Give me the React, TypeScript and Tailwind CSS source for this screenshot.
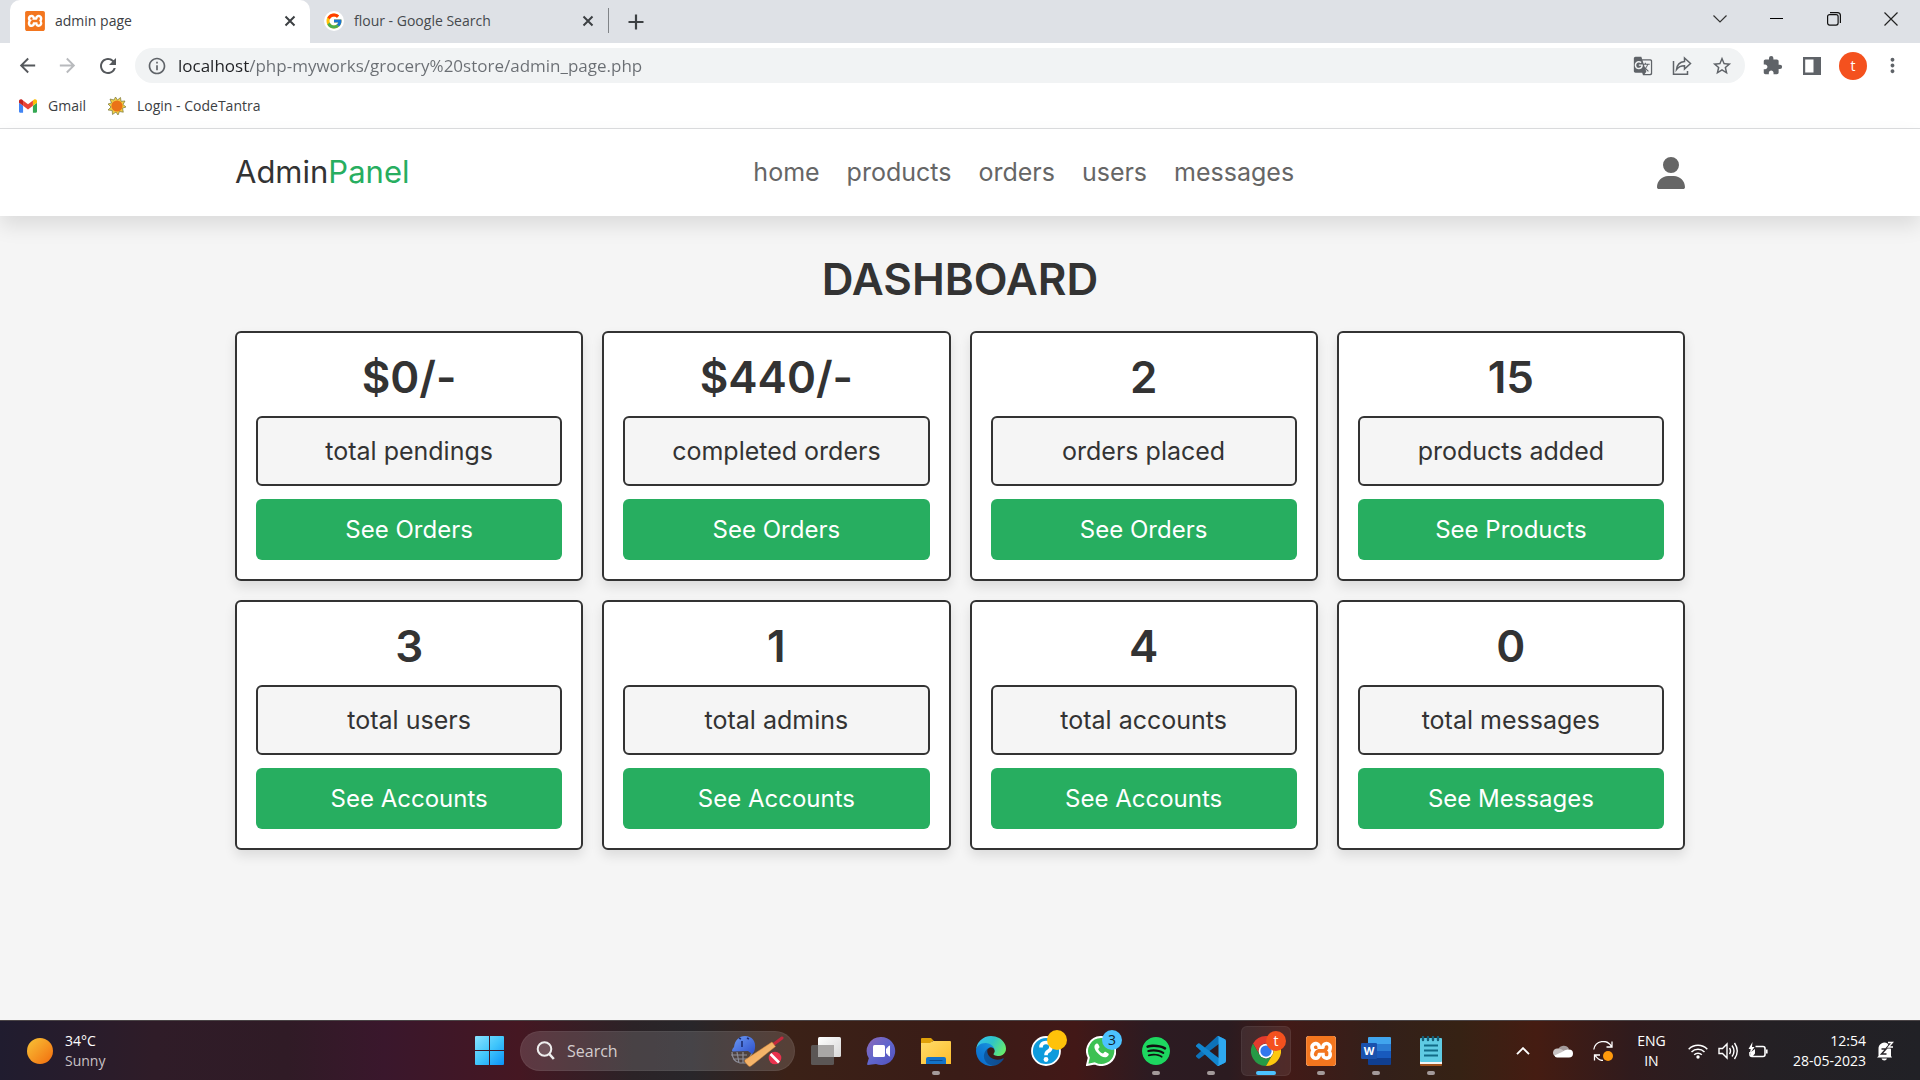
import React, { useState } from "react";
import { FcGoogle } from "react-icons/fc";
import { FaUser } from "react-icons/fa6";
import { SiXampp, SiSpotify } from "react-icons/si";
import {
  MdArrowBack,
  MdArrowForward,
  MdExtension,
  MdGTranslate,
  MdInfoOutline,
  MdMoreVert,
  MdRefresh,
  MdStarBorder,
} from "react-icons/md";

/* ---------- Browser chrome ---------- */

function XamppIcon({ className }: { className: string }) {
  return (
    <span className={`${className} flex shrink-0 rounded-[3px] bg-white`}>
      <SiXampp className="size-full text-[#f3761f]" />
    </span>
  );
}

function CloseGlyph() {
  return (
    <svg viewBox="0 0 12 12" className="size-3" stroke="#3c4043" strokeWidth="2">
      <path d="M1.5 1.5 10.5 10.5M10.5 1.5 1.5 10.5" />
    </svg>
  );
}

function GmailIcon() {
  return (
    <svg viewBox="52 42 88 66" className="h-[14px] w-[18px]">
      <path fill="#4285f4" d="M58 108h14V74L52 59v43c0 3.32 2.69 6 6 6" />
      <path fill="#34a853" d="M120 108h14c3.32 0 6-2.69 6-6V59l-20 15" />
      <path fill="#fbbc04" d="M120 48v26l20-15v-8c0-7.42-8.47-11.65-14.4-7.2" />
      <path fill="#ea4335" d="M72 74V48l24 18 24-18v26L96 92" />
      <path fill="#c5221f" d="M52 51v8l20 15V48l-5.6-4.2c-5.94-4.45-14.4-.22-14.4 7.2" />
    </svg>
  );
}

function SunIcon() {
  return (
    <svg viewBox="0 0 20 20" className="size-5">
      <path
        d="M8.500 1 10.500 4l3-2.500.5 3.800 4-.3-2 3.500 3 2.500-3.500 1.200.8 4-3.800-.7L11 19l-2-3-3.500 2.500-.3-4-4.200-.5L4 11 1 8l3.500-1L3 3l4 1z"
        fill="#f0cf45"
        stroke="#77763f"
        strokeWidth=".7"
      />
      <circle cx="10" cy="10" r="5.600" fill="#ea7317" />
    </svg>
  );
}

function TabStrip() {
  return (
    <div className="flex h-[43px] items-stretch bg-[#dee1e6] pl-[10px]">
      <div className="flex w-[300px] items-center rounded-t-[10px] bg-white pr-3 pb-[2px] pl-[15px]">
        <XamppIcon className="size-5" />
        <button className="ml-[10px] flex-1 text-left text-sm text-[#3c4043]">admin page</button>
        <button aria-label="Close admin page" className="p-[2px]">
          <CloseGlyph />
        </button>
      </div>
      <div className="mt-2 mb-[10px] flex w-[299px] items-center border-r border-[#808387] pr-3 pl-[14px]">
        <span className="flex size-5 items-center justify-center rounded-full bg-white">
          <FcGoogle className="size-[18px]" />
        </span>
        <button className="ml-[10px] flex-1 text-left text-sm text-[#45494d]">flour - Google Search</button>
        <button aria-label="Close flour search" className="p-[2px]">
          <CloseGlyph />
        </button>
      </div>
      <button aria-label="New tab" className="ml-[19px]">
        <svg viewBox="0 0 16 16" className="size-4" stroke="#3c4043" strokeWidth="2.200">
          <path d="M8 0.500v15M.5 8h15" />
        </svg>
      </button>
      <div className="ml-auto flex pb-[6px]">
        <button aria-label="Search tabs" className="flex w-[57px] items-center justify-center">
          <svg viewBox="0 0 14 8" className="h-2 w-[14px]" fill="none" stroke="#333" strokeWidth="1.200">
            <path d="M.5.5 7 7 13.500.5" />
          </svg>
        </button>
        <button aria-label="Minimize" className="flex w-[57px] items-center justify-center">
          <span className="h-px w-[13px] bg-black" />
        </button>
        <button aria-label="Restore" className="flex w-[57px] items-center justify-center">
          <svg viewBox="0 0 14 14" className="size-[14px]" fill="none" stroke="#111" strokeWidth="1.200">
            <rect x=".6" y="2.600" width="10.500" height="10.500" rx="2" />
            <path d="M3 .6h7.500q2.900 0 2.900 2.900V11" />
          </svg>
        </button>
        <button aria-label="Close window" className="flex w-[58px] items-center justify-center">
          <svg viewBox="0 0 14 14" className="size-[14px]" stroke="#222" strokeWidth="1.200">
            <path d="M.5.5l13 13M13.500.5l-13 13" />
          </svg>
        </button>
      </div>
    </div>
  );
}

function Toolbar() {
  return (
    <div className="flex h-[45px] items-center bg-white pr-4 pl-4 text-[#5f6368]">
      <button aria-label="Back" className="w-10">
        <MdArrowBack className="size-[23px] text-[#55585c]" />
      </button>
      <button aria-label="Forward" className="w-10">
        <MdArrowForward className="size-[23px] text-[#b8babd]" />
      </button>
      <button aria-label="Reload" className="w-[39px]">
        <MdRefresh className="size-6 text-[#55585c]" />
      </button>
      <div className="flex h-[35px] flex-1 items-center rounded-full bg-[#f1f3f4] pr-3 pl-3">
        <MdInfoOutline className="size-5" />
        <input
          aria-label="Address"
          defaultValue="localhost/php-myworks/grocery%20store/admin_page.php"
          className="ml-[11px] flex-1 bg-[linear-gradient(to_right,#202124_71px,#6a6e73_71px)] bg-clip-text text-[17px] text-transparent outline-none"
        />
        <div className="flex gap-[19px]">
          <button aria-label="Translate this page">
            <MdGTranslate className="size-5" />
          </button>
          <button aria-label="Share">
            <svg viewBox="0 0 20 20" className="size-5" fill="none" stroke="#5f6368" strokeWidth="1.500">
              <path d="M1.500 5v13.200h14V15" />
              <path d="M12.500 2l6 5.500-6 5.500v-3.200c-3.500 0-6 1-8 3.700.5-4.500 3-7.500 8-8z" />
            </svg>
          </button>
          <button aria-label="Bookmark this page">
            <MdStarBorder className="size-[22px]" />
          </button>
        </div>
      </div>
      <div className="ml-[17px] flex items-center">
        <button aria-label="Extensions" className="w-10">
          <MdExtension className="size-[21px]" />
        </button>
        <button aria-label="Side panel" className="w-[37px]">
          <svg viewBox="0 0 20 18" className="h-[18px] w-5">
            <path fill="#5f6368" fillRule="evenodd" d="M1 0h18v18H1zM3.200 2.500v13h8.300v-13z" />
          </svg>
        </button>
        <button className="size-7 rounded-full bg-[#f4511e] text-sm text-white">t</button>
        <button aria-label="Menu" className="ml-[14px]">
          <MdMoreVert className="size-[23px]" />
        </button>
      </div>
    </div>
  );
}

function Bookmarks() {
  return (
    <div className="flex h-[41px] items-center gap-[21px] border-b border-[#dcdddf] bg-white pb-1 pl-[19px] text-sm text-[#3c4043]">
      <a href="#gmail" className="flex items-center gap-[11px]">
        <GmailIcon />
        Gmail
      </a>
      <a href="#codetantra" className="flex items-center gap-[10px]">
        <SunIcon />
        Login - CodeTantra
      </a>
    </div>
  );
}

/* ---------- Admin page ---------- */

const navLinks = ["home", "products", "orders", "users", "messages"];

const cards = [
  { value: "$0/-", label: "total pendings", action: "See Orders" },
  { value: "$440/-", label: "completed orders", action: "See Orders" },
  { value: "2", label: "orders placed", action: "See Orders" },
  { value: "15", label: "products added", action: "See Products" },
  { value: "3", label: "total users", action: "See Accounts" },
  { value: "1", label: "total admins", action: "See Accounts" },
  { value: "4", label: "total accounts", action: "See Accounts" },
  { value: "0", label: "total messages", action: "See Messages" },
];

function SiteHeader() {
  return (
    <header className="relative bg-white shadow-[0_10px_19px_rgba(0,0,0,0.1)]">
      <div className="mx-auto flex h-[87px] max-w-[1500px] items-center justify-between px-[25px]">
        <a href="#home" className="text-[31px] text-[#333]">
          Admin<span className="text-[#27ae60]">Panel</span>
        </a>
        <nav className="flex gap-[27px] text-[25px] text-[#666]">
          {navLinks.map((link) => (
            <a key={link} href={`#${link}`}>
              {link}
            </a>
          ))}
        </nav>
        <button aria-label="Account" className="pl-[19px]">
          <FaUser className="h-8 w-7 text-[#666]" />
        </button>
      </div>
    </header>
  );
}

function Dashboard() {
  return (
    <main className="mx-auto w-full max-w-[1500px] flex-1 px-[25px] pt-[37px] pb-[25px] text-[#333]">
      <h1 className="mb-[26px] text-center text-[44px] leading-[52px] font-semibold">DASHBOARD</h1>
      <div className="grid grid-cols-4 gap-[19px]">
        {cards.map((card) => (
          <section
            key={card.label}
            className="rounded-md border-2 border-[#333] bg-white p-[19px] text-center shadow-[0_6px_12px_rgba(0,0,0,0.1)]"
          >
            <h3 className="text-[44px] leading-[50px] font-semibold">{card.value}</h3>
            <p className="mt-[14px] mb-[13px] rounded-md border-2 border-[#333] bg-[#f5f5f5] text-[25px] leading-[66px]">
              {card.label}
            </p>
            <a href="#details" className="block rounded-md bg-[#27ae60] text-2xl leading-[61px] text-white">
              {card.action}
            </a>
          </section>
        ))}
      </div>
    </main>
  );
}

/* ---------- Taskbar ---------- */

function WindowsIcon() {
  return (
    <svg viewBox="0 0 29 29" className="size-[29px]">
      <defs>
        <linearGradient id="win" x1="0" y1="0" x2="1" y2="1">
          <stop offset="0" stopColor="#8ae2ff" />
          <stop offset=".5" stopColor="#41c6fb" />
          <stop offset="1" stopColor="#0b92f8" />
        </linearGradient>
      </defs>
      <path
        fill="url(#win)"
        d="M1 0h13v14H0V1q0-1 1-1zM15 0h13q1 0 1 1v13H15zM0 15h14v14H1q-1 0-1-1zM15 15h14v13q0 1-1 1H15z"
      />
    </svg>
  );
}

function CricketIcon() {
  return (
    <svg viewBox="0 0 54 32" className="h-8 w-[54px]">
      <defs>
        <linearGradient id="bat" x1="0" y1="0" x2="1" y2="1">
          <stop offset="0" stopColor="#f3a04e" />
          <stop offset="1" stopColor="#f7c683" />
        </linearGradient>
        <linearGradient id="helmet" x1="0" y1="0" x2="1" y2="1">
          <stop offset="0" stopColor="#6d9cf5" />
          <stop offset="1" stopColor="#2d4fcb" />
        </linearGradient>
      </defs>
      <path
        d="M2 17c0 6 3 10 8 11h7l6-12M1 20h16M3 24h14M7 17l2 11M13 17v11"
        fill="none"
        stroke="#8d8d98"
        strokeWidth="1.200"
      />
      <path d="M4 12C5 5 9 1 15 1c7 0 11 5 10 12-.2 3-1.500 5-3 6l-4-3-15.500.500q-1.500-1 1.500-4.500z" fill="url(#helmet)" />
      <path d="M12 6v6M9 3l2 1M17 3l2 1" stroke="#1c2e73" strokeWidth="1.600" />
      <path d="M44 9l8-6" stroke="#c5283d" strokeWidth="3" strokeLinecap="round" />
      <path d="M42 7l3.500 4.500L21 31q-1.500 1-3-.5l-3-3.500q-1-1.500.5-2.500z" fill="url(#bat)" stroke="#c77e35" strokeWidth=".5" />
      <circle cx="45" cy="23" r="6.300" fill="#e9324d" />
      <path d="M40.500 19l8.500 8.500" stroke="#fff" strokeWidth="2.600" />
    </svg>
  );
}

function TaskViewIcon() {
  return (
    <svg viewBox="0 0 30 28" className="h-7 w-[30px]">
      <defs>
        <linearGradient id="tv" x1="0" y1="0" x2="1" y2="1">
          <stop offset="0" stopColor="#fff" />
          <stop offset="1" stopColor="#d8d8d8" />
        </linearGradient>
      </defs>
      <rect y="8" width="23" height="20" rx="1.500" fill="#5b5655" />
      <rect x="7" width="23" height="20" rx="1.500" fill="url(#tv)" />
      <path d="M7 8h16v12H8.500Q7 20 7 18.500z" fill="#a9a7a6" />
    </svg>
  );
}

function ChatIcon() {
  return (
    <svg viewBox="0 0 30 30" className="size-[30px]">
      <defs>
        <linearGradient id="chat" x1="0" y1="0" x2="1" y2="1">
          <stop offset="0" stopColor="#8d68b8" />
          <stop offset=".5" stopColor="#6066cd" />
          <stop offset="1" stopColor="#5150bd" />
        </linearGradient>
      </defs>
      <path d="M15 1a14 14 0 1 1-5 27l-8 1q-1.200 0-.8-1.200l1.600-5.500A14 14 0 0 1 15 1z" fill="url(#chat)" />
      <rect x="7" y="9" width="12" height="12" rx="1.500" fill="#fff" />
      <path d="M20.500 13l3-3.200v10.400l-3-3.200z" fill="#fff" stroke="#fff" strokeLinejoin="round" />
    </svg>
  );
}

function FolderIcon() {
  return (
    <svg viewBox="0 0 30 28" className="h-7 w-[30px]">
      <defs>
        <linearGradient id="folder" x1="0" y1="0" x2="1" y2="1">
          <stop offset="0" stopColor="#ffdc6a" />
          <stop offset="1" stopColor="#fdbd2c" />
        </linearGradient>
      </defs>
      <path d="M0 2q0-1 1-1h9l3 3h-2v6H0z" fill="#e0a10a" />
      <path d="M0 6h9l3-2h17q1 0 1 1v22H0z" fill="url(#folder)" />
      <path d="M5 27v-5q0-2 2-2h16q2 0 2 2v5z" fill="#1373c9" />
      <path d="M9 23.500h12" stroke="#0a4a8f" strokeWidth="1.200" strokeLinecap="round" />
    </svg>
  );
}

function EdgeIcon() {
  return (
    <svg viewBox="0 0 256 256" className="size-[30px]">
      <defs>
        <linearGradient id="e1" x1="0" y1="0" x2="1" y2="0">
          <stop offset="0" stopColor="#0c59a4" />
          <stop offset="1" stopColor="#114a8b" />
        </linearGradient>
        <linearGradient id="e2" x1="1" y1="0" x2=".2" y2="1">
          <stop offset="0" stopColor="#1b9de2" />
          <stop offset=".6" stopColor="#0f7ad3" />
          <stop offset="1" stopColor="#0b6acb" />
        </linearGradient>
        <linearGradient id="e3" x1="0" y1=".2" x2="1" y2=".6">
          <stop offset="0" stopColor="#35c1f1" />
          <stop offset=".5" stopColor="#2fc4c8" />
          <stop offset="1" stopColor="#66eb6e" />
        </linearGradient>
      </defs>
      <path fill="url(#e1)" d="M231 190.500a94 94 0 0 1-10.500 4.700 102 102 0 0 1-36 6.500c-47.400 0-88.700-32.600-88.700-74.500a31.600 31.600 0 0 1 16.400-27.300c-42.900 1.800-53.900 46.500-53.900 72.700 0 74.100 68.300 81.600 83 81.600 7.900 0 19.900-2.300 27-4.600l1.300-.4a128.300 128.300 0 0 0 66.600-52.800 4 4 0 0 0-5.200-5.900z" />
      <path fill="url(#e2)" d="M105.700 241.400a79.200 79.200 0 0 1-22.700-21.300 80.700 80.700 0 0 1 29.400-120.200c3.100-1.500 8.500-4.100 15.600-4a32.400 32.400 0 0 1 25.700 13 31.900 31.900 0 0 1 6.300 18.700c0-.2 24.500-79.600-80-79.600-43.900 0-80 41.700-80 78.200a130.200 130.200 0 0 0 12.100 56 128 128 0 0 0 156.400 67.100 75.500 75.500 0 0 1-62.800-7.900z" />
      <path fill="url(#e3)" d="M152.300 148.900c-.9 1-3.400 2.500-3.400 5.600 0 2.600 1.700 5.200 4.800 7.300 14.300 10 41.400 8.600 41.500 8.600a59.600 59.600 0 0 0 30.300-8.300 61.400 61.400 0 0 0 30.400-52.900c.3-22.400-8-37.300-11.300-43.900C223.500 23.900 177.700 0 128 0A128 128 0 0 0 0 126.200c.5-36.500 36.800-66 80-66 3.500 0 23.500.3 42 10a72.600 72.600 0 0 1 30.900 29.300c6.100 10.600 7.200 24.100 7.200 29.500 0 5.400-2.700 13.300-7.800 19.900z" />
    </svg>
  );
}

function HelpIcon() {
  return (
    <svg viewBox="0 0 30 30" className="size-[30px]">
      <circle cx="15" cy="15" r="14" fill="#0e9bdc" stroke="#fff" strokeWidth="1.800" />
      <path d="M10 11.500q0-5 5-5t5 4.500q0 3-3 4.300-2 1-2 4" fill="none" stroke="#fff" strokeWidth="3.600" />
      <circle cx="15" cy="23.500" r="2.400" fill="#fff" />
    </svg>
  );
}

function WhatsAppIcon() {
  return (
    <svg viewBox="0 0 30 30" className="size-[30px]">
      <path d="M15.500 1A14 14 0 1 1 8.800 27.400L1 29l1.800-7.300A14 14 0 0 1 15.500 1z" fill="#3cc153" stroke="#fff" strokeWidth="2" />
      <path
        d="M10.500 7.500c-3 1.500-2.600 5 .4 8.800 3.600 4.400 8.600 6.500 11 3.800 1.500-1.700 1-2.300-.3-3.100l-2.200-1.200c-1-.5-1.500 1.500-2.500 1.600-1.500 0-4.300-2.600-4.600-4.200-.1-.9 1.600-1.400 1.200-2.400l-1.100-2.400c-.4-.9-1.200-1.200-1.900-.9z"
        fill="#fff"
      />
    </svg>
  );
}

function VsCodeIcon() {
  return (
    <svg viewBox="0 0 100 100" className="size-[30px]">
      <path fill="#0d72b9" d="M96.500 10.600 75.900.9a6.200 6.200 0 0 0-7.100 1.200L1.300 63.800a4.200 4.200 0 0 0 0 6.200l5.500 5a4.200 4.200 0 0 0 5.300.2L93.400 13.400c2.700-2 6.600-.1 6.600 3.300v-.2a6.200 6.200 0 0 0-3.500-5.900z" />
      <path fill="#1286cf" d="M96.500 89.400l-20.600 9.700a6.200 6.200 0 0 1-7.100-1.200L1.300 36.200a4.200 4.200 0 0 1 0-6.200l5.500-5a4.200 4.200 0 0 1 5.300-.2l81.300 61.800c2.700 2 6.600.1 6.600-3.300v.2a6.200 6.200 0 0 1-3.500 5.900z" />
      <path fill="#2ea8f0" d="M75.900 99.100a6.200 6.200 0 0 1-7.100-1.200c2.300 2.300 6.200.7 6.200-2.600V4.700c0-3.300-3.900-4.900-6.200-2.600A6.200 6.200 0 0 1 75.900.9l20.600 9.900a6.200 6.200 0 0 1 3.500 5.600v67.200a6.200 6.200 0 0 1-3.500 5.600z" />
    </svg>
  );
}

function ChromeIcon() {
  return (
    <svg viewBox="0 0 48 48" className="size-[30px]">
      <path fill="#e33b2e" d="M24 0a24 24 0 0 1 20.800 12H24a12 12 0 0 0-10.400 18L3.200 12A24 24 0 0 1 24 0z" />
      <path fill="#269a46" d="M3.200 12l10.400 18A12 12 0 0 0 34.400 30L24 48A24 24 0 0 1 3.200 12z" />
      <path fill="#fdc80f" d="M44.800 12A24 24 0 0 1 24 48l10.400-18A12 12 0 0 0 34.400 18 12 12 0 0 0 24 12z" />
      <circle cx="24" cy="24" r="11.800" fill="#fff" />
      <circle cx="24" cy="24" r="9" fill="#3277ee" />
    </svg>
  );
}

function WordIcon() {
  return (
    <svg viewBox="0 0 30 28" className="h-7 w-[30px]">
      <path fill="#41a5ee" d="M7 1q0-1 1-1h21q1 0 1 1v6H7z" />
      <path fill="#2b7cd3" d="M7 7h23v7H7z" />
      <path fill="#185abd" d="M7 14h23v7H7z" />
      <path fill="#103f91" d="M7 21h23v6q0 1-1 1H8q-1 0-1-1z" />
      <rect y="6" width="16" height="16" rx="1.300" fill="#1a52ad" />
      <text x="8" y="18" textAnchor="middle" fontSize="11" fontWeight="700" fill="#fff" fontFamily="Open Sans, sans-serif">
        W
      </text>
    </svg>
  );
}

function NotepadIcon() {
  return (
    <svg viewBox="0 0 24 30" className="h-[30px] w-6">
      <rect x="1" y="20" width="22" height="10" rx="1" fill="#a3541d" />
      <path d="M1 24h22v4H1z" fill="#f4f4f4" />
      <rect x="1" y="2" width="22" height="24" rx="1" fill="#5fcbe3" />
      <path d="M5 9.500h14M5 14.500h14M5 19.500h14" stroke="#116b87" strokeWidth="1.800" />
      <path d="M4 1v3M9 1v3M14 1v3M19 1v3" stroke="#15607a" strokeWidth="2.400" strokeLinecap="round" />
    </svg>
  );
}

type TaskItem = {
  name: string;
  icon: React.ReactNode;
  running?: boolean;
  active?: boolean;
  badge?: { text: string; style: string };
};

const taskItems: TaskItem[] = [
  { name: "Task view", icon: <TaskViewIcon /> },
  { name: "Chat", icon: <ChatIcon /> },
  { name: "File Explorer", icon: <FolderIcon />, running: true },
  { name: "Edge", icon: <EdgeIcon /> },
  { name: "Get Help", icon: <HelpIcon />, badge: { text: "", style: "bg-[#ffc20a]" } },
  { name: "WhatsApp", icon: <WhatsAppIcon />, badge: { text: "3", style: "bg-[#4cc2ff] text-[#10222c]" } },
  {
    name: "Spotify",
    icon: (
      <span className="flex rounded-full bg-[#111]">
        <SiSpotify className="size-7 text-[#1ed760]" />
      </span>
    ),
    running: true,
  },
  { name: "Visual Studio Code", icon: <VsCodeIcon />, running: true },
  { name: "Chrome", icon: <ChromeIcon />, active: true, badge: { text: "t", style: "bg-[#f4511e] text-white" } },
  { name: "XAMPP", icon: <XamppIcon className="size-[30px]" />, running: true },
  { name: "Word", icon: <WordIcon />, running: true },
  { name: "Notepad", icon: <NotepadIcon />, running: true },
];

function TaskButton({ item }: { item: TaskItem }) {
  return (
    <button
      aria-label={item.name}
      className={
        item.active
          ? "relative flex size-[50px] items-center justify-center rounded-md border border-white/5 bg-white/8"
          : "relative flex size-[50px] items-center justify-center"
      }
    >
      {item.icon}
      {item.badge && (
        <span
          className={`absolute top-1 right-1 flex size-5 items-center justify-center rounded-full text-sm leading-none ${item.badge.style}`}
        >
          {item.badge.text}
        </span>
      )}
      {item.running && <span className="absolute bottom-px h-1 w-2 rounded-full bg-[#a39a9a]" />}
      {item.active && <span className="absolute bottom-0 h-1 w-5 rounded-full bg-[#4cc2ff]" />}
    </button>
  );
}

function Tray() {
  return (
    <div className="flex items-center pr-[26px]">
      <button aria-label="Show hidden icons">
        <svg viewBox="0 0 14 8" className="h-2 w-[14px]" fill="none" stroke="#fff" strokeWidth="1.900">
          <path d="M1 7.200 7 1.200l6 6" />
        </svg>
      </button>
      <button aria-label="OneDrive" className="ml-[23px]">
        <svg viewBox="0 0 20 14" className="h-[14px] w-5">
          <path d="M5 6a6 6 0 0 1 11-1l-5 5z" fill="#a39a9b" />
          <path d="M4.500 4.500Q8 4 11 7l-6 6H4A4.200 4.200 0 0 1 4.500 4.500z" fill="#c8c2c2" />
          <path d="M1.500 11.500 9 8q3-3 7-2.500a4 4 0 0 1 0 8H4q-2 0-2.500-2z" fill="#fff" />
        </svg>
      </button>
      <button aria-label="Updates" className="ml-5">
        <svg viewBox="0 0 20 20" className="size-5" fill="none" stroke="#fff" strokeWidth="1.300">
          <path d="M.8 8.500A9.500 9.500 0 0 1 18.500 5.500M19 .5v5.500h-5.500M10 19.500q-5 0-8-5.500M1.500 19.500V14h5.500" />
          <circle cx="15" cy="15" r="5" fill="#ff9a0c" stroke="none" />
        </svg>
      </button>
      <button className="ml-6 flex w-[29px] flex-col items-center text-sm leading-5">
        <span>ENG</span>
        <span>IN</span>
      </button>
      <button aria-label="Network, volume and battery" className="ml-[22px] flex items-center gap-[10px]">
        <svg viewBox="0 0 20 16" className="h-4 w-5" fill="none" stroke="#fff" strokeWidth="1.500">
          <path d="M.7 6.200a13.200 13.200 0 0 1 18.600 0M3.500 9a9.200 9.200 0 0 1 13 0M6.200 11.700a5.400 5.400 0 0 1 7.600 0" />
          <circle cx="10" cy="14" r="1.700" fill="#fff" stroke="none" />
        </svg>
        <svg viewBox="0 0 20 18" className="h-[18px] w-5" fill="none" stroke="#fff" strokeWidth="1.400">
          <path d="M1 6.500h3.500L9 2v14l-4.500-4.500H1zM11.500 6q2 3 0 6M14 3.500q4 5.500 0 11M16.500 1q5.500 8 0 16" />
        </svg>
        <svg viewBox="0 0 20 17" className="h-[17px] w-5" fill="none" stroke="#fff" strokeWidth="1.600">
          <path d="M7.500 4.500H15q2 0 2 2v6q0 2-2 2H4q-2 0-2-2V10M18.800 7.500v4" />
          <path d="M4.500 0 .5 7h2.200l-1 5L6.500 5H4zM3 14v-4l4-3v4.500L5 14z" fill="#fff" stroke="none" />
        </svg>
      </button>
      <button className="ml-[25px] flex flex-col items-end text-sm leading-5">
        <span>12:54</span>
        <span>28-05-2023</span>
      </button>
      <button aria-label="Notifications" className="ml-[10px]">
        <svg viewBox="0 0 18 20" className="h-5 w-[18px]">
          <path d="M2.500 15V8a6 6 0 0 1 9-5.500L15 8v7l1 1.500H1z" fill="#fff" />
          <path d="M5.500 17.500h5.500q-.5 2-2.700 2t-2.800-2z" fill="#fff" />
          <path d="M12 1.500h4.500l-4 4.500H17" fill="none" stroke="#29252a" strokeWidth="3" />
          <path d="M12 1.500h4.500l-4 4.500H17" fill="none" stroke="#fff" strokeWidth="1.300" />
          <path d="M5.500 8h4.500l-4.500 5h5" fill="none" stroke="#29252a" strokeWidth="1.500" />
        </svg>
      </button>
    </div>
  );
}

function Taskbar() {
  const [query, setQuery] = useState("");
  return (
    <footer className="flex h-[60px] items-center border-t border-[#4a4446] bg-[linear-gradient(90deg,#201c2f_0%,#2f1c28_8%,#301b26_15%,#3a172c_20%,#451722_27%,#2b2327_33%,#28262a_36%,#3b2117_41%,#3a1c17_50%,#421817_56%,#2c1b22_60%,#2b1b20_64%,#421a17_67%,#33201a_72%,#362214_76%,#451c12_80%,#301b1d_85%,#242024_92%,#212126_100%)] text-white">
      <div className="flex min-w-0 flex-1">
        <button className="ml-[27px] flex items-center gap-3 text-left text-sm leading-5">
          <span className="size-[26px] rounded-full bg-linear-to-br from-[#f6c336] to-[#f16a0a]" />
          <span className="flex flex-col">
            <span>34°C</span>
            <span className="text-[#c9c2c6]">Sunny</span>
          </span>
        </button>
      </div>
      <div className="flex shrink-0 items-center gap-[5px]">
        <button aria-label="Start" className="flex size-[50px] items-center justify-center">
          <WindowsIcon />
        </button>
        <label className="mx-px flex h-10 w-[275px] items-center rounded-full border border-white/5 bg-white/14 pr-[10px] pl-[15px]">
          <svg viewBox="0 0 19 19" className="size-[19px] shrink-0" fill="none" stroke="#eee" strokeWidth="2">
            <circle cx="8.500" cy="8" r="6.800" fill="#fff2" />
            <path d="M13.300 13l4.500 5" strokeWidth="2.600" />
          </svg>
          <input
            aria-label="Search"
            placeholder="Search"
            value={query}
            onChange={(e) => setQuery(e.target.value)}
            className="ml-3 min-w-0 flex-1 bg-transparent text-base outline-none placeholder:text-[#d3cdce]"
          />
          <CricketIcon />
        </label>
        {taskItems.map((item) => (
          <TaskButton key={item.name} item={item} />
        ))}
      </div>
      <div className="flex flex-1 justify-end">
        <Tray />
      </div>
    </footer>
  );
}

export default function App() {
  return (
    <div className="flex min-h-screen flex-col bg-[#f5f5f5] font-['Open_Sans',sans-serif]">
      <TabStrip />
      <Toolbar />
      <Bookmarks />
      <div className="flex flex-1 flex-col font-['Inter',sans-serif]">
        <SiteHeader />
        <Dashboard />
      </div>
      <Taskbar />
    </div>
  );
}
